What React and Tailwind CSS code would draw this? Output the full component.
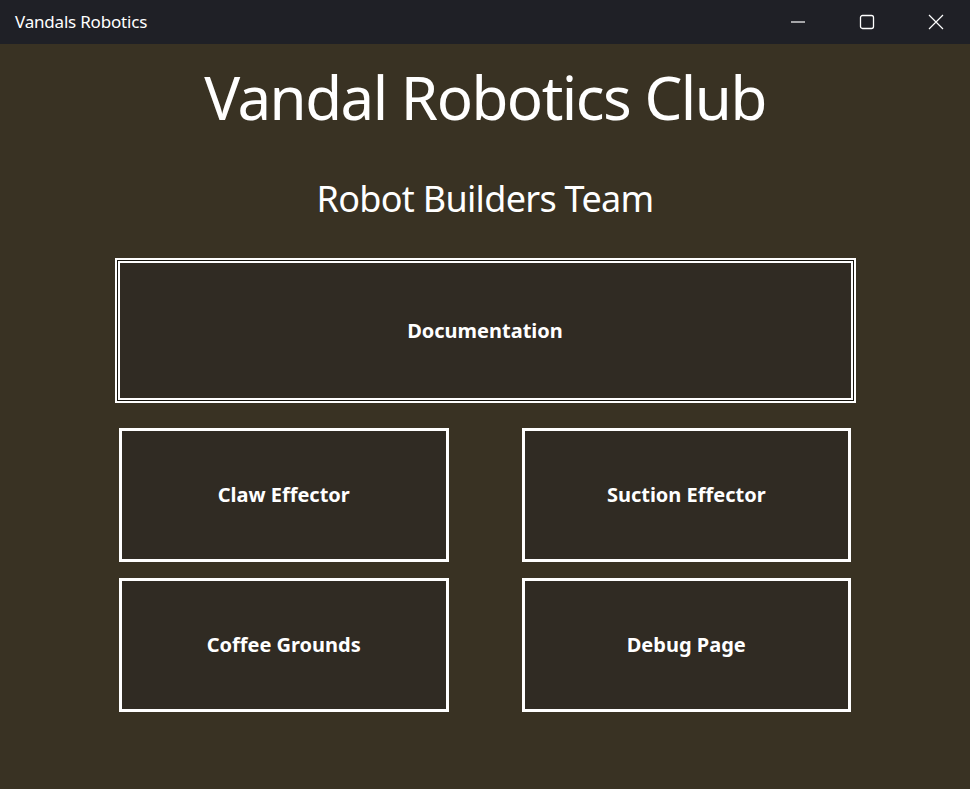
import React from 'react';

const font = { fontFamily: '"Noto Sans", "Open Sans", sans-serif' };

// Title bar window controls
const TitleBar = () => (
  <div className="h-[44px] bg-[#1f2026] flex items-center justify-between text-white">
    <span className="pl-[15px] text-[17px] tracking-[-0.2px]">Vandals Robotics</span>
    <div className="flex h-full">
      <button className="w-[69px] h-full flex items-center justify-center">
        <svg width="16" height="16" viewBox="0 0 16 16"><path d="M1 8h14" stroke="white" strokeWidth="1.2" /></svg>
      </button>
      <button className="w-[69px] h-full flex items-center justify-center">
        <svg width="16" height="16" viewBox="0 0 16 16"><rect x="1.5" y="1.5" width="13" height="13" rx="2" fill="none" stroke="white" strokeWidth="1.3" /></svg>
      </button>
      <button className="w-[69px] h-full flex items-center justify-center">
        <svg width="16" height="16" viewBox="0 0 16 16"><path d="M1 1l14 14M15 1L1 15" stroke="white" strokeWidth="1.2" /></svg>
      </button>
    </div>
  </div>
);

const NavButton = ({ label, focused }) => (
  <div className={focused ? 'border-2 border-white p-px bg-black/60' : ''}>
    <button
      className={`w-full border-white bg-[#302b23] text-white text-[20px] font-bold ${
        focused ? 'h-[139px] border-2' : 'h-[134px] border-[3px]'
      }`}
    >
      {label}
    </button>
  </div>
);

export default function App() {
  return (
    <div className="h-[789px] w-[970px] bg-[#393223] flex flex-col" style={font}>
      <TitleBar />
      <main className="flex-1 flex flex-col items-center">
        <h1 className="mt-[13px] text-[60px] leading-[80px] tracking-[-1.5px] text-white">Vandal Robotics Club</h1>
        <h2 className="mt-[32px] text-[36px] leading-[60px] tracking-[-0.7px] text-white">Robot Builders Team</h2>
        <div className="mt-[29px] w-[741px]">
          <NavButton label="Documentation" focused />
        </div>
        <div className="mt-[25px] w-[732px] grid grid-cols-2 gap-x-[73px] gap-y-[16px]">
          <NavButton label="Claw Effector" />
          <NavButton label="Suction Effector" />
          <NavButton label="Coffee Grounds" />
          <NavButton label="Debug Page" />
        </div>
      </main>
    </div>
  );
}
